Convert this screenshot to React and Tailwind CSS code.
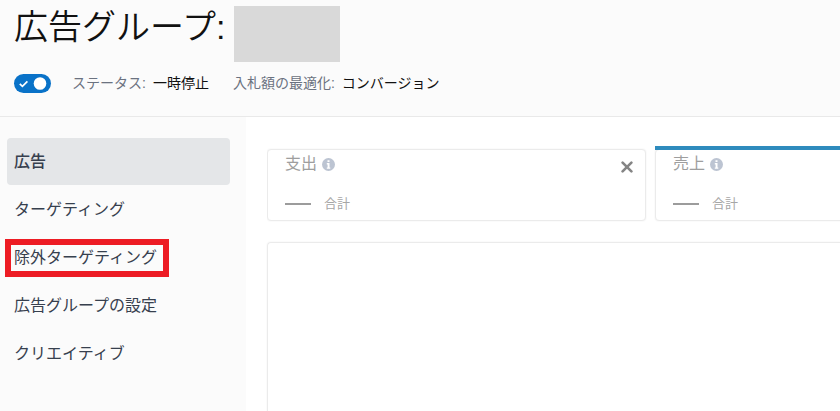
import React, { useState } from 'react';

const navItems = [
  { id: 'ads', label: '広告' },
  { id: 'targeting', label: 'ターゲティング' },
  { id: 'negative', label: '除外ターゲティング', highlighted: true },
  { id: 'settings', label: '広告グループの設定' },
  { id: 'creative', label: 'クリエイティブ' },
];

const metrics = [
  { id: 'spend', label: '支出' },
  { id: 'sales', label: '売上', selected: true },
];

const InfoIcon = () => (
  <svg viewBox="0 0 13 13" className="w-[13px] h-[13px] shrink-0" aria-hidden="true">
    <circle cx="6.5" cy="6.5" r="6.5" fill="#bcc4d2" />
    <path d="M5.5 2.2h2v1.9h-2zM4.8 5.1h2.7v4.3h.8v1.3H4.8V9.4h.8V6.4h-.8z" fill="#fff" />
  </svg>
);

const CloseIcon = () => (
  <svg viewBox="0 0 12 12" className="w-3 h-3" aria-hidden="true">
    <path d="M1.6 1.6l8.8 8.8M10.4 1.6l-8.8 8.8" stroke="#858585" strokeWidth="2.6" fill="none" strokeLinecap="round" />
  </svg>
);

const StatusToggle = () => {
  const [enabled, setEnabled] = useState(true);

  return (
    <label className="relative block w-[37px] h-[19px] shrink-0">
      <input
        type="checkbox"
        aria-label="ステータス"
        checked={enabled}
        onChange={() => setEnabled(!enabled)}
        className="block w-full h-full appearance-none rounded-full bg-gray-400 checked:bg-[#0972c8]"
      />
      <svg viewBox="0 0 37 19" className="absolute inset-0 w-full h-full pointer-events-none" aria-hidden="true">
        {enabled && <path d="M5.8 9.8l2.6 2.5 5-5" stroke="#fff" strokeWidth="1.7" fill="none" />}
        <circle cx={enabled ? 26 : 11} cy="9.5" r="6.3" fill="#fff" />
      </svg>
    </label>
  );
};

const MetricCard = ({ metric }) => (
  <section className="relative w-[379px] h-[72px] shrink-0 rounded border border-[#ebebeb] shadow-[0_0_2px_#eeeeee] bg-white pl-[17px] pr-3">
    {metric.selected && <span className="absolute -top-1 -left-px -right-px h-1 bg-[#2e8bbd]"></span>}
    <div className="flex items-start justify-between">
      <h2 className="flex items-center gap-[5px] h-7 text-base leading-7 text-[#9e9e9e]">
        {metric.label}
        <InfoIcon />
      </h2>
      <button type="button" aria-label="閉じる" className="mt-[11px] -mr-0.5 w-4 flex justify-center">
        <CloseIcon />
      </button>
    </div>
    <div className="flex items-center gap-[13px] h-5 mt-4 text-[13px] leading-5 text-[#a6a6a6]">
      <span className="w-[26px] h-0.5 bg-[#9c9c9c]"></span>
      合計
    </div>
  </section>
);

const App = () => {
  const [active, setActive] = useState('ads');

  return (
    <div className="min-h-screen flex flex-col overflow-hidden bg-white font-['Liberation_Sans','Noto_Sans_CJK_JP',sans-serif]">
      <header className="h-[117px] shrink-0 bg-[#fbfbfb] border-b border-[#e9e9e9] pl-[14px] pt-[6px]">
        <div className="flex items-start gap-[9px]">
          <h1 className="text-[34px] leading-[42px] font-[350] text-[#111111]">広告グループ:</h1>
          <div className="w-[106px] h-14 bg-[#d9d9d9]"></div>
        </div>
        <div className="flex items-center mt-[9px] text-sm leading-6">
          <StatusToggle />
          <p className="flex gap-[7px] ml-[21px] whitespace-nowrap text-[#6b7280]">
            ステータス:
            <span className="text-[#111111]">一時停止</span>
          </p>
          <p className="flex gap-[7px] ml-6 whitespace-nowrap text-[#6b7280]">
            入札額の最適化:
            <span className="text-[#111111]">コンバージョン</span>
          </p>
        </div>
      </header>

      <div className="flex flex-1">
        <nav className="w-[246px] shrink-0 bg-[#fbfbfb] pl-[7px] pr-4 pt-[21px]">
          <ul className="flex flex-col gap-px">
            {navItems.map((item) => (
              <li key={item.id} className="relative">
                <a
                  href={`#${item.id}`}
                  onClick={() => setActive(item.id)}
                  className={`block h-[47px] px-[7px] rounded text-base leading-12 text-[#37404e] ${active === item.id ? 'bg-[#e4e6e8] font-medium' : ''}`}
                >
                  {item.label}
                </a>
                {item.highlighted && (
                  <span className="absolute top-[5px] -left-0.5 w-[164px] h-[38px] border-6 border-[#ed1c24] pointer-events-none"></span>
                )}
              </li>
            ))}
          </ul>
        </nav>

        <main className="flex-1 min-w-0 flex flex-col pl-[21px] pt-8">
          <div className="flex gap-[9px] overflow-x-clip">
            {metrics.map((metric) => (
              <MetricCard key={metric.id} metric={metric} />
            ))}
          </div>
          <div className="flex-1 mt-[21px] rounded-tl border-t border-l border-[#ebebeb] shadow-[0_0_2px_#eeeeee]"></div>
        </main>
      </div>
    </div>
  );
};

export default App;
